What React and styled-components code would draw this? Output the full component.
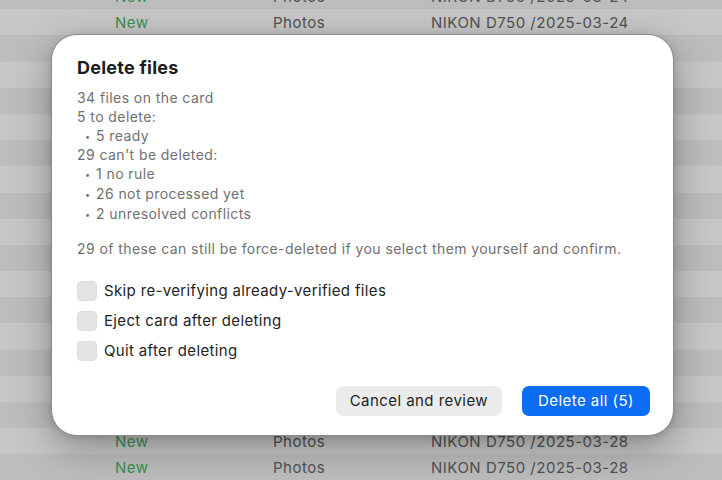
import styled, { createGlobalStyle } from 'styled-components'

const Global = createGlobalStyle`
  html, body {
    margin: 0;
    padding: 0;
    width: 722px;
    height: 480px;
    overflow: hidden;
    font-family: Inter, "Noto Sans", "Liberation Sans", sans-serif;
  }
`

const Screen = styled.div`
  position: relative;
  width: 722px;
  height: 480px;
  overflow: hidden;
  background: #fff;
`

const List = styled.div`
  display: flex;
  flex-direction: column;
  margin-top: -17px;
`

const Row = styled.div`
  display: grid;
  grid-template-columns: 115px 158px 158px 1fr;
  align-items: center;
  height: 26.2px;
  flex-shrink: 0;
  background: ${p => (p.$alt ? '#f3f3f3' : '#ffffff')};
  font-size: 15px;
  letter-spacing: 0.5px;
  color: #6a6a6a;
`

const Status = styled.span`
  grid-column: 2;
  color: #4cb86a;
`

const Cell = styled.span`
  white-space: nowrap;
`

const Backdrop = styled.div`
  position: absolute;
  inset: 0;
  background: rgba(0, 0, 0, 0.22);
  padding: 34px 0 0 51px;
`

const Dialog = styled.div`
  width: 623px;
  box-sizing: border-box;
  background: #fff;
  border-radius: 26px;
  border: 1px solid #8c8c8c;
  box-shadow: 0 12px 40px rgba(0, 0, 0, 0.3), 0 2px 8px rgba(0, 0, 0, 0.14);
  padding: 22px 23px 19px 25px;
  display: flex;
  flex-direction: column;
`

const Title = styled.h1`
  margin: 0;
  font-size: 18px;
  line-height: 22px;
  font-weight: 700;
  letter-spacing: 0.25px;
  color: #1c1c1c;
`

const Body = styled.div`
  margin-top: 10px;
  font-size: 14px;
  line-height: 18.8px;
  letter-spacing: 0.42px;
  color: #707070;
`

const Line = styled.div`
  padding-left: ${p => (p.$bullet ? '8px' : '0')};
  white-space: nowrap;
`

const Dot = styled.span`
  display: inline-block;
  width: 11px;
  font-size: 9px;
  vertical-align: 1px;
`

const Note = styled.p`
  margin: 14px 0 0;
  font-size: 14px;
  line-height: 19px;
  letter-spacing: 0.42px;
  color: #707070;
  white-space: nowrap;
`

const Options = styled.div`
  margin-top: 18px;
  display: flex;
  flex-direction: column;
`

const Option = styled.label`
  display: flex;
  align-items: center;
  gap: 7px;
  height: 30px;
  font-size: 15px;
  letter-spacing: 0.35px;
  color: #242424;
`

const Box = styled.span`
  width: 20px;
  height: 20px;
  border-radius: 5px;
  background: #e4e4e4;
  box-shadow: inset 0 0 0 0.5px #d6d6d6;
  flex-shrink: 0;
`

const Actions = styled.div`
  margin-top: 20px;
  display: flex;
  justify-content: flex-end;
  gap: 20px;
`

const Button = styled.button`
  height: 30px;
  padding: 0 ${p => (p.$primary ? '16px' : '14px')};
  border: none;
  border-radius: 7px;
  font-family: inherit;
  font-size: 15px;
  letter-spacing: 0.45px;
  background: ${p => (p.$primary ? '#0b6cf6' : '#ebebeb')};
  color: ${p => (p.$primary ? '#fff' : '#1e1e1e')};
`

// only the rows outside the dialog are readable; the ones underneath are plain stripes
const rows = [
  '2025-03-24', '2025-03-24',
  ...Array(15).fill(null),
  '2025-03-28', '2025-03-28',
]

const Bullet = ({ children }) => (
  <Line $bullet><Dot>•</Dot>{children}</Line>
)

const App = () => (
  <Screen>
    <Global />
    <List>
      {rows.map((d, i) => (
        <Row key={i} $alt={i % 2 === 0}>
          {d && (
            <>
              <Status>New</Status>
              <Cell>Photos</Cell>
              <Cell>NIKON D750 /{d}</Cell>
            </>
          )}
        </Row>
      ))}
    </List>
    <Backdrop>
      <Dialog>
        <Title>Delete files</Title>
        <Body>
          <Line>34 files on the card</Line>
          <Line>5 to delete:</Line>
          <Bullet>5 ready</Bullet>
          <Line>29 can't be deleted:</Line>
          <Bullet>1 no rule</Bullet>
          <Bullet>26 not processed yet</Bullet>
          <Bullet>2 unresolved conflicts</Bullet>
        </Body>
        <Note>29 of these can still be force-deleted if you select them yourself and confirm.</Note>
        <Options>
          <Option><Box />Skip re-verifying already-verified files</Option>
          <Option><Box />Eject card after deleting</Option>
          <Option><Box />Quit after deleting</Option>
        </Options>
        <Actions>
          <Button>Cancel and review</Button>
          <Button $primary>Delete all (5)</Button>
        </Actions>
      </Dialog>
    </Backdrop>
  </Screen>
)

export default App
